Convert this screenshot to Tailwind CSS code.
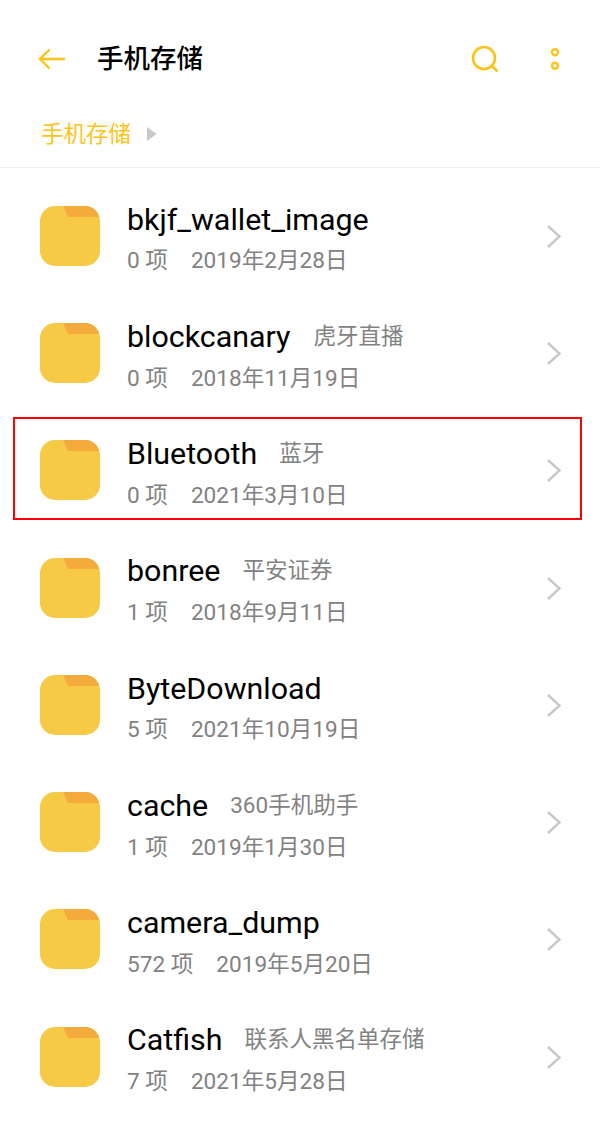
<!DOCTYPE html>
<html lang="zh-CN">
<head>
<meta charset="utf-8">
<script src="https://cdn.jsdelivr.net/npm/@tailwindcss/browser@4"></script>
<title>手机存储</title>
</head>
<body class="bg-white">
<div class="relative w-[600px] h-[1127px] overflow-hidden bg-white font-['Roboto','Noto_Sans_CJK_SC',sans-serif]">
  <header class="h-[118px] flex items-center pl-[38px] pr-[40px]">
    <svg class="w-[28px] h-[24px] shrink-0" viewBox="0 0 28 24" fill="none" stroke="#fdc417" stroke-width="2.400"><path d="M27 12H2M11.500 2.500L2 12l9.500 9.500"/></svg>
    <h1 class="ml-[31px] text-[26.5px] font-medium text-black">手机存储</h1>
    <div class="ml-auto flex items-center gap-[51px]">
      <svg class="w-[28px] h-[28px]" viewBox="0 0 28 28" fill="none" stroke="#fdc417" stroke-width="2.600"><circle cx="13" cy="13" r="11"/><path d="M21 21l5.500 5.500"/></svg>
      <svg class="w-[10px] h-[24px]" viewBox="0 0 10 24" fill="none" stroke="#fdc417" stroke-width="2.400"><circle cx="5" cy="5.200" r="3"/><circle cx="5" cy="18.800" r="3"/></svg>
    </div>
  </header>
  <nav class="h-[50px] pl-[41px] flex items-start border-b border-[#eeeeee]">
    <span class="text-[22.500px] leading-[32px] text-[#fdc417]">手机存储</span>
    <svg class="ml-[16px] mt-[9px] w-[10px] h-[14px]" viewBox="0 0 10 14"><path d="M0 0L9.500 7L0 14Z" fill="#c8c8c8"/></svg>
  </nav>
  <main class="pt-[9.250px]">
    <div class="h-[117.25px] flex items-center pl-[40px] pr-[39px]">
      <svg class="w-[60px] h-[60px] shrink-0" viewBox="0 0 60 60"><rect width="60" height="60" rx="15" fill="#f6ca45"/><path d="M23 0H45C52 0 57 4 59 11H28Z" fill="#f4ab3c"/></svg>
      <div class="ml-[27px] flex-1 min-w-0 pt-[6px]"><div class="flex items-center h-[36px]"><span class="text-[30.400px] text-black">bkjf_wallet_image</span></div><div class="mt-[9px] text-[22.600px] leading-[30px] text-[#828282]">0 项<span class="ml-[23px]">2019年2月28日</span></div></div>
      <svg class="w-[14px] h-[24px] shrink-0" viewBox="0 0 14 24" fill="none" stroke="#c8c8c8" stroke-width="2.400"><path d="M1 2l11.500 10.500L1 23"/></svg>
    </div>
    <div class="h-[117.25px] flex items-center pl-[40px] pr-[39px]">
      <svg class="w-[60px] h-[60px] shrink-0" viewBox="0 0 60 60"><rect width="60" height="60" rx="15" fill="#f6ca45"/><path d="M23 0H45C52 0 57 4 59 11H28Z" fill="#f4ab3c"/></svg>
      <div class="ml-[27px] flex-1 min-w-0 pt-[6px]"><div class="flex items-center h-[36px]"><span class="text-[30.400px] text-black">blockcanary</span><span class="ml-[23px] text-[22.500px] text-[#828282]">虎牙直播</span></div><div class="mt-[9px] text-[22.600px] leading-[30px] text-[#828282]">0 项<span class="ml-[23px]">2018年11月19日</span></div></div>
      <svg class="w-[14px] h-[24px] shrink-0" viewBox="0 0 14 24" fill="none" stroke="#c8c8c8" stroke-width="2.400"><path d="M1 2l11.500 10.500L1 23"/></svg>
    </div>
    <div class="h-[117.25px] flex items-center pl-[40px] pr-[39px]">
      <svg class="w-[60px] h-[60px] shrink-0" viewBox="0 0 60 60"><rect width="60" height="60" rx="15" fill="#f6ca45"/><path d="M23 0H45C52 0 57 4 59 11H28Z" fill="#f4ab3c"/></svg>
      <div class="ml-[27px] flex-1 min-w-0 pt-[6px]"><div class="flex items-center h-[36px]"><span class="text-[30.400px] text-black">Bluetooth</span><span class="ml-[22px] text-[22.500px] text-[#828282]">蓝牙</span></div><div class="mt-[9px] text-[22.600px] leading-[30px] text-[#828282]">0 项<span class="ml-[23px]">2021年3月10日</span></div></div>
      <svg class="w-[14px] h-[24px] shrink-0" viewBox="0 0 14 24" fill="none" stroke="#c8c8c8" stroke-width="2.400"><path d="M1 2l11.500 10.500L1 23"/></svg>
    </div>
    <div class="h-[117.25px] flex items-center pl-[40px] pr-[39px]">
      <svg class="w-[60px] h-[60px] shrink-0" viewBox="0 0 60 60"><rect width="60" height="60" rx="15" fill="#f6ca45"/><path d="M23 0H45C52 0 57 4 59 11H28Z" fill="#f4ab3c"/></svg>
      <div class="ml-[27px] flex-1 min-w-0 pt-[6px]"><div class="flex items-center h-[36px]"><span class="text-[30.400px] text-black">bonree</span><span class="ml-[22px] text-[22.500px] text-[#828282]">平安证券</span></div><div class="mt-[9px] text-[22.600px] leading-[30px] text-[#828282]">1 项<span class="ml-[23px]">2018年9月11日</span></div></div>
      <svg class="w-[14px] h-[24px] shrink-0" viewBox="0 0 14 24" fill="none" stroke="#c8c8c8" stroke-width="2.400"><path d="M1 2l11.500 10.500L1 23"/></svg>
    </div>
    <div class="h-[117.25px] flex items-center pl-[40px] pr-[39px]">
      <svg class="w-[60px] h-[60px] shrink-0" viewBox="0 0 60 60"><rect width="60" height="60" rx="15" fill="#f6ca45"/><path d="M23 0H45C52 0 57 4 59 11H28Z" fill="#f4ab3c"/></svg>
      <div class="ml-[27px] flex-1 min-w-0 pt-[6px]"><div class="flex items-center h-[36px]"><span class="text-[30.400px] text-black">ByteDownload</span></div><div class="mt-[9px] text-[22.600px] leading-[30px] text-[#828282]">5 项<span class="ml-[23px]">2021年10月19日</span></div></div>
      <svg class="w-[14px] h-[24px] shrink-0" viewBox="0 0 14 24" fill="none" stroke="#c8c8c8" stroke-width="2.400"><path d="M1 2l11.500 10.500L1 23"/></svg>
    </div>
    <div class="h-[117.25px] flex items-center pl-[40px] pr-[39px]">
      <svg class="w-[60px] h-[60px] shrink-0" viewBox="0 0 60 60"><rect width="60" height="60" rx="15" fill="#f6ca45"/><path d="M23 0H45C52 0 57 4 59 11H28Z" fill="#f4ab3c"/></svg>
      <div class="ml-[27px] flex-1 min-w-0 pt-[6px]"><div class="flex items-center h-[36px]"><span class="text-[30.400px] text-black">cache</span><span class="ml-[22px] text-[22.500px] text-[#828282]">360手机助手</span></div><div class="mt-[9px] text-[22.600px] leading-[30px] text-[#828282]">1 项<span class="ml-[23px]">2019年1月30日</span></div></div>
      <svg class="w-[14px] h-[24px] shrink-0" viewBox="0 0 14 24" fill="none" stroke="#c8c8c8" stroke-width="2.400"><path d="M1 2l11.500 10.500L1 23"/></svg>
    </div>
    <div class="h-[117.25px] flex items-center pl-[40px] pr-[39px]">
      <svg class="w-[60px] h-[60px] shrink-0" viewBox="0 0 60 60"><rect width="60" height="60" rx="15" fill="#f6ca45"/><path d="M23 0H45C52 0 57 4 59 11H28Z" fill="#f4ab3c"/></svg>
      <div class="ml-[27px] flex-1 min-w-0 pt-[6px]"><div class="flex items-center h-[36px]"><span class="text-[30.400px] text-black">camera_dump</span></div><div class="mt-[9px] text-[22.600px] leading-[30px] text-[#828282]">572 项<span class="ml-[23px]">2019年5月20日</span></div></div>
      <svg class="w-[14px] h-[24px] shrink-0" viewBox="0 0 14 24" fill="none" stroke="#c8c8c8" stroke-width="2.400"><path d="M1 2l11.500 10.500L1 23"/></svg>
    </div>
    <div class="h-[117.25px] flex items-center pl-[40px] pr-[39px]">
      <svg class="w-[60px] h-[60px] shrink-0" viewBox="0 0 60 60"><rect width="60" height="60" rx="15" fill="#f6ca45"/><path d="M23 0H45C52 0 57 4 59 11H28Z" fill="#f4ab3c"/></svg>
      <div class="ml-[27px] flex-1 min-w-0 pt-[6px]"><div class="flex items-center h-[36px]"><span class="text-[30.400px] text-black">Catfish</span><span class="ml-[22px] text-[22.500px] text-[#828282]">联系人黑名单存储</span></div><div class="mt-[9px] text-[22.600px] leading-[30px] text-[#828282]">7 项<span class="ml-[23px]">2021年5月28日</span></div></div>
      <svg class="w-[14px] h-[24px] shrink-0" viewBox="0 0 14 24" fill="none" stroke="#c8c8c8" stroke-width="2.400"><path d="M1 2l11.500 10.500L1 23"/></svg>
    </div>
  </main>
  <div class="absolute left-[13px] top-[417px] w-[569px] h-[102.500px] border-2 border-[#ff0000]"></div>
</div>
</body>
</html>
